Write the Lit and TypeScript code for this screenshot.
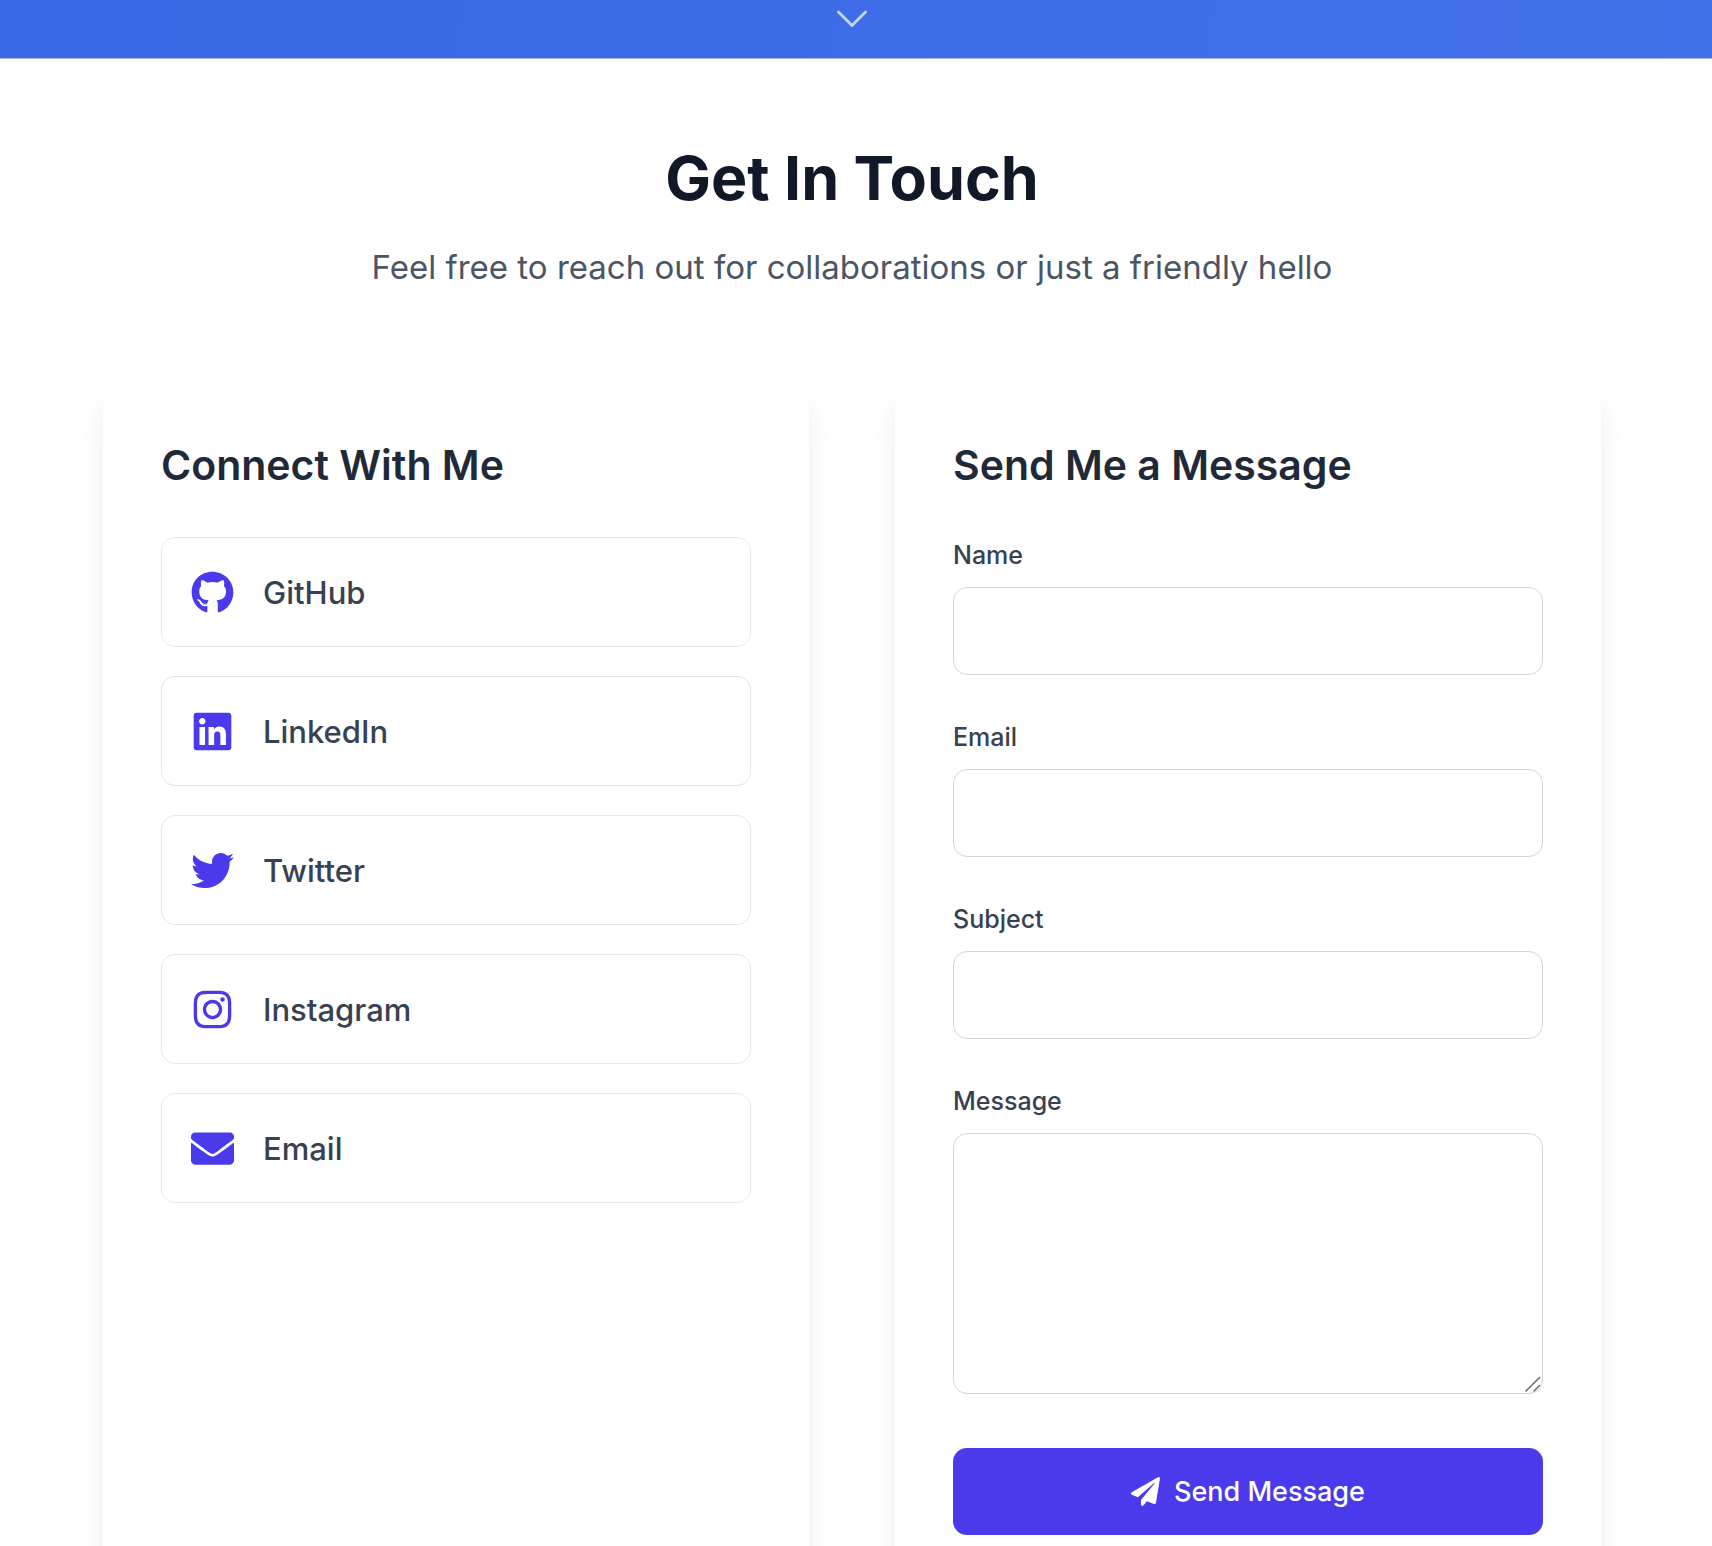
import { LitElement, html, svg, css } from "lit";
import { customElement } from "lit/decorators.js";

interface Icon {
  box: string;
  path: string;
}

const icons: Record<string, Icon> = {
  github: {
    box: "0 0 496 512",
    path: "M165.9 397.4c0 2-2.3 3.6-5.2 3.6-3.3.3-5.6-1.3-5.6-3.6 0-2 2.3-3.6 5.2-3.6 3-.3 5.6 1.3 5.6 3.6zm-31.1-4.5c-.7 2 1.3 4.3 4.3 4.9 2.6 1 5.6 0 6.2-2s-1.3-4.3-4.3-5.2c-2.6-.7-5.5.3-6.2 2.3zm44.2-1.7c-2.9.7-4.9 2.6-4.6 4.9.3 2 2.9 3.3 5.9 2.6 2.9-.7 4.9-2.6 4.6-4.6-.3-1.9-3-3.2-5.9-2.9zM244.8 8C106.1 8 0 113.3 0 252c0 110.9 69.8 205.8 169.5 239.2 12.8 2.3 17.3-5.6 17.3-12.1 0-6.2-.3-40.4-.3-61.4 0 0-70 15-84.7-29.8 0 0-11.4-29.1-27.8-36.6 0 0-22.9-15.7 1.6-15.4 0 0 24.9 2 38.6 25.8 21.9 38.6 58.6 27.5 72.9 20.9 2.3-16 8.8-27.1 16-33.7-55.9-6.2-112.3-14.3-112.3-110.5 0-27.5 7.6-41.3 23.6-58.9-2.6-6.5-11.1-33.3 2.6-67.9 20.9-6.5 69 27 69 27 20-5.6 41.5-8.5 62.8-8.5s42.8 2.9 62.8 8.5c0 0 48.1-33.6 69-27 13.7 34.7 5.2 61.4 2.6 67.9 16 17.7 25.8 31.5 25.8 58.9 0 96.5-58.9 104.2-114.8 110.5 9.2 7.9 17 22.9 17 46.4 0 33.7-.3 75.4-.3 83.6 0 6.5 4.6 14.4 17.3 12.1C428.2 457.8 496 362.9 496 252 496 113.3 383.5 8 244.8 8z",
  },
  linkedin: {
    box: "0 0 448 512",
    path: "M416 32H31.9C14.3 32 0 46.5 0 64.3v383.4C0 465.5 14.3 480 31.9 480H416c17.6 0 32-14.5 32-32.3V64.3c0-17.8-14.4-32.3-32-32.3zM135.4 416H69V202.2h66.5V416zm-33.2-243c-21.3 0-38.5-17.3-38.5-38.5S80.9 96 102.2 96c21.2 0 38.5 17.3 38.5 38.5 0 21.3-17.2 38.5-38.5 38.5zm282.1 243h-66.4V312c0-24.8-.5-56.7-34.5-56.7-34.6 0-39.9 27-39.9 54.9V416h-66.4V202.2h63.7v29.2h.9c8.9-16.8 30.6-34.5 62.9-34.5 67.2 0 79.7 44.3 79.7 101.9V416z",
  },
  twitter: {
    box: "0 0 512 512",
    path: "M459.37 151.716c.325 4.548.325 9.097.325 13.645 0 138.72-105.583 298.558-298.558 298.558-59.452 0-114.68-17.219-161.137-47.106 8.447.974 16.568 1.299 25.34 1.299 49.055 0 94.213-16.568 130.274-44.832-46.132-.975-84.792-31.188-98.112-72.772 6.498.974 12.995 1.624 19.818 1.624 9.421 0 18.843-1.3 27.614-3.573-48.081-9.747-84.143-51.98-84.143-102.985v-1.299c13.969 7.797 30.214 12.67 47.431 13.319-28.264-18.843-46.781-51.005-46.781-87.391 0-19.492 5.197-37.36 14.294-52.954 51.655 63.675 129.3 105.258 216.365 109.807-1.624-7.797-2.599-15.918-2.599-24.04 0-57.828 46.782-104.934 104.934-104.934 30.213 0 57.502 12.67 76.67 33.137 23.715-4.548 46.456-13.32 66.599-25.34-7.798 24.366-24.366 44.833-46.132 57.827 21.117-2.273 41.584-8.122 60.426-16.243-14.292 20.791-32.161 39.308-52.628 54.253z",
  },
  instagram: {
    box: "0 0 448 512",
    path: "M224.1 141c-63.6 0-114.9 51.3-114.9 114.9s51.3 114.9 114.9 114.9S339 319.5 339 255.9 287.7 141 224.1 141zm0 189.6c-41.1 0-74.7-33.5-74.7-74.7s33.5-74.7 74.7-74.7 74.7 33.5 74.7 74.7-33.6 74.7-74.7 74.7zm146.4-194.3c0 14.9-12 26.8-26.8 26.8-14.9 0-26.8-12-26.8-26.8s12-26.8 26.8-26.8 26.8 12 26.8 26.8zm76.1 27.2c-1.7-35.9-9.9-67.7-36.2-93.9-26.2-26.2-58-34.4-93.9-36.2-37-2.1-147.9-2.1-184.9 0-35.8 1.7-67.6 9.9-93.9 36.1s-34.4 58-36.2 93.9c-2.1 37-2.1 147.9 0 184.9 1.7 35.9 9.9 67.7 36.2 93.9s58 34.4 93.9 36.2c37 2.1 147.9 2.1 184.9 0 35.9-1.7 67.7-9.9 93.9-36.2 26.2-26.2 34.4-58 36.2-93.9 2.1-37 2.1-147.8 0-184.8zM398.8 388c-7.8 19.6-22.9 34.7-42.6 42.6-29.5 11.7-99.5 9-132.1 9s-102.7 2.6-132.1-9c-19.6-7.8-34.7-22.9-42.6-42.6-11.7-29.5-9-99.5-9-132.1s-2.6-102.7 9-132.1c7.8-19.6 22.9-34.7 42.6-42.6 29.5-11.7 99.5-9 132.1-9s102.7-2.6 132.1 9c19.6 7.8 34.7 22.9 42.6 42.6 11.7 29.5 9 99.5 9 132.1s2.7 102.7-9 132.1z",
  },
  email: {
    box: "0 0 512 512",
    path: "M502.3 190.8c3.9-3.1 9.7-.2 9.7 4.6V400c0 26.5-21.5 48-48 48H48c-26.5 0-48-21.5-48-48V195.6c0-5 5.7-7.8 9.7-4.6 22.4 17.4 52.1 39.5 154.1 113.6 21.1 15.4 56.7 47.8 92.2 47.6 35.7.3 72-32.8 92.3-47.6 102-74.1 131.6-96.3 154-113.7zM256 320c23.2.4 56.6-29.2 73.4-41.4 132.7-96.3 142.8-104.7 173.4-128.7 5.8-4.5 9.2-11.5 9.2-18.9v-19c0-26.5-21.5-48-48-48H48c-26.5 0-48 21.5-48 48v19c0 7.4 3.4 14.3 9.2 18.9 30.6 23.9 40.7 32.4 173.4 128.7 16.8 12.2 50.2 41.8 73.4 41.4z",
  },
  send: {
    box: "0 0 512 512",
    path: "M476 3.2L12.5 270.6c-18.1 10.4-15.8 35.6 2.2 43.2L121 358.4l287.3-253.2c5.5-4.9 13.3 2.6 8.6 8.3L176 407v80.5c0 23.6 28.5 32.9 42.5 15.8L282 426l124.6 52.2c14.2 6 30.4-2.9 33-18.2l72-432C515 7.8 493.3-6.8 476 3.2z",
  },
};

const icon = (name: string) => html`
  <svg class="icon" viewBox=${icons[name].box} fill="currentColor" aria-hidden="true">
    ${svg`<path d=${icons[name].path}></path>`}
  </svg>
`;

const links = [
  { icon: "github", label: "GitHub", href: "#github" },
  { icon: "linkedin", label: "LinkedIn", href: "#linkedin" },
  { icon: "twitter", label: "Twitter", href: "#twitter" },
  { icon: "instagram", label: "Instagram", href: "#instagram" },
  { icon: "email", label: "Email", href: "#email" },
];

const fields = [
  { id: "name", label: "Name", type: "text" },
  { id: "email", label: "Email", type: "email" },
  { id: "subject", label: "Subject", type: "text" },
];

@customElement("app-root")
export class AppRoot extends LitElement {
  static styles = css`
    :host {
      display: block;
      background: #fff;
      color: #1f2937;
      font-family: Inter, "Liberation Sans", sans-serif;
      padding-right: 8px;
    }
    * {
      box-sizing: border-box;
    }
    .hero {
      display: flex;
      justify-content: center;
      align-items: flex-start;
      height: 59px;
      padding-top: 8px;
      padding-right: 8px;
      margin-right: -8px;
      background: linear-gradient(100deg, #3a67e5, #4270e9);
      border-bottom: 1px solid #9fb5f4;
      color: #c4d2f8;
    }
    .chevron {
      width: 36px;
      height: 20px;
    }
    .contact {
      padding: 79px 103px;
    }
    .intro {
      text-align: center;
      margin-bottom: 84px;
    }
    .title {
      margin: 0 0 23px;
      font-size: 61px;
      line-height: 80px;
      font-weight: 700;
      color: #111827;
    }
    .subtitle {
      margin: 0;
      font-size: 33px;
      line-height: 52px;
      color: #4b5563;
    }
    .cards {
      display: grid;
      grid-template-columns: 1fr 1fr;
      gap: 86px;
    }
    .card {
      background: #fff;
      border-radius: 29px;
      padding: 58px;
      box-shadow: 0 17px 30px -4px rgba(0, 0, 0, 0.1);
    }
    .heading {
      margin: 0 0 42px;
      font-size: 41px;
      line-height: 60px;
      font-weight: 600;
    }
    .links {
      display: flex;
      flex-direction: column;
      gap: 29px;
    }
    .link {
      display: flex;
      align-items: center;
      gap: 29px;
      height: 110px;
      padding: 0 29px;
      border: 1px solid #e5e7eb;
      border-radius: 14px;
      color: #374151;
      font-size: 31px;
      font-weight: 500;
      text-decoration: none;
    }
    .icon {
      flex: none;
      width: 43px;
      height: 43px;
      color: #4b3aeb;
    }
    .form {
      display: flex;
      flex-direction: column;
    }
    .field {
      display: flex;
      flex-direction: column;
      gap: 14px;
      margin-bottom: 44px;
    }
    .label {
      font-size: 25px;
      line-height: 36px;
      font-weight: 500;
      color: #374151;
    }
    .input {
      width: 100%;
      height: 88px;
      padding: 0 28px;
      border: 1px solid #d1d5db;
      border-radius: 14px;
      background: #fff;
      font: inherit;
      font-size: 27px;
      color: #1f2937;
    }
    .message {
      position: relative;
      display: flex;
    }
    .area {
      height: 261px;
      padding: 20px 28px;
      resize: vertical;
    }
    .area::-webkit-resizer {
      display: none;
    }
    .grip {
      position: absolute;
      right: 1px;
      bottom: 1px;
      width: 18px;
      height: 18px;
      pointer-events: none;
    }
    .submit {
      display: flex;
      align-items: center;
      justify-content: center;
      gap: 14px;
      height: 87px;
      margin-top: 10px;
      border: 0;
      border-radius: 14px;
      background: #4b3aeb;
      color: #fff;
      font: inherit;
      font-size: 27px;
      font-weight: 500;
    }
    .submit .icon {
      width: 29px;
      height: 29px;
      color: #fff;
    }
  `;

  render() {
    return html`
      <div class="hero">
        <svg class="chevron" viewBox="0 0 36 20" fill="none" stroke="currentColor" stroke-width="3"
          stroke-linecap="round" stroke-linejoin="round" aria-hidden="true">
          <path d="M4.5 4 18 17.5 31.5 4"></path>
        </svg>
      </div>
      <main class="contact">
        <header class="intro">
          <h2 class="title">Get In Touch</h2>
          <p class="subtitle">Feel free to reach out for collaborations or just a friendly hello</p>
        </header>
        <div class="cards">
          <section class="card">
            <h3 class="heading">Connect With Me</h3>
            <nav class="links">
              ${links.map(
                (l) => html`<a class="link" href=${l.href}>${icon(l.icon)}<span>${l.label}</span></a>`,
              )}
            </nav>
          </section>
          <section class="card">
            <h3 class="heading">Send Me a Message</h3>
            <form class="form">
              ${fields.map(
                (f) => html`
                  <div class="field">
                    <label class="label" for=${f.id}>${f.label}</label>
                    <input class="input" id=${f.id} name=${f.id} type=${f.type} />
                  </div>
                `,
              )}
              <div class="field">
                <label class="label" for="message">Message</label>
                <div class="message">
                  <textarea class="input area" id="message" name="message"></textarea>
                  <svg class="grip" viewBox="0 0 18 18" fill="none" stroke="#6b6b6b" stroke-width="1.5"
                    aria-hidden="true">
                    <path d="M1.5 16.5 16 2M9.5 16.5 16 10"></path>
                  </svg>
                </div>
              </div>
              <button class="submit" type="submit">${icon("send")}<span>Send Message</span></button>
            </form>
          </section>
        </div>
      </main>
    `;
  }
}
